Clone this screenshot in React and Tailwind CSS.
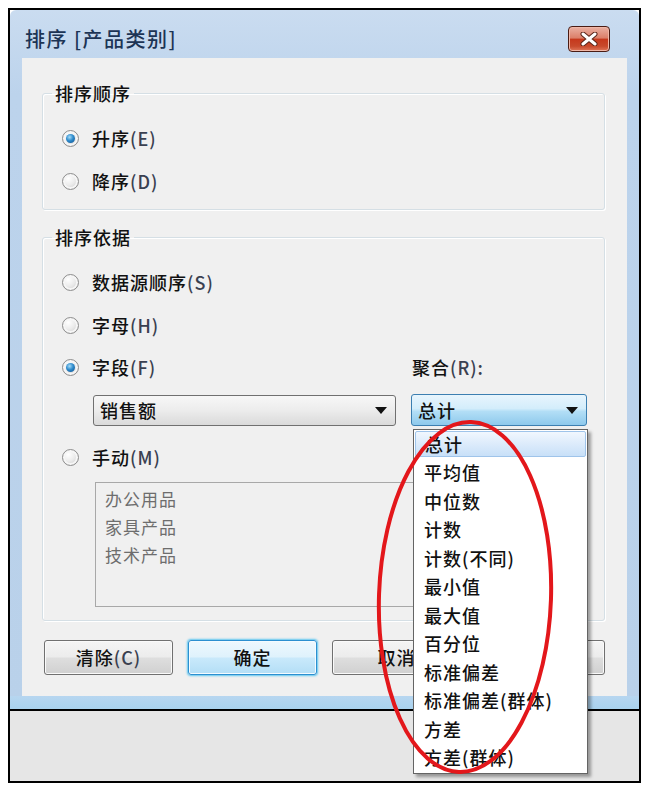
import React from "react";

function Radio({ checked }) {
  return (
    <span className="w-[17px] h-[17px] shrink-0 rounded-full border border-[#8e8e8e] bg-[radial-gradient(circle_at_35%_30%,#ffffff_0%,#ececec_45%,#c8c8c8_100%)] flex items-center justify-center shadow-[inset_0_0_0_2px_#f6f6f6]">
      {checked && (
        <span className="w-[9px] h-[9px] rounded-full bg-[radial-gradient(circle_at_40%_35%,#a6dcf8_0%,#2e8bcc_45%,#0a4a88_100%)]" />
      )}
    </span>
  );
}

function RadioRow({ checked, label, hot, className = "" }) {
  return (
    <div className={"flex items-center h-[26px] gap-[13px] " + className}>
      <Radio checked={checked} />
      <span className="whitespace-nowrap">
        {label}
        <span className="text-[#3a4050]">({hot})</span>
      </span>
    </div>
  );
}

function Arrow() {
  return (
    <svg width="12" height="7" viewBox="0 0 12 7" className="shrink-0">
      <polygon points="0,0 12,0 6,7" fill="#111" />
    </svg>
  );
}

function Group({ title, children, className = "" }) {
  return (
    <fieldset className={"ml-[20px] mr-[22px] border border-[#d5dfe5] rounded-[3px] shadow-[inset_1px_1px_0_#ffffff,1px_1px_0_#ffffff] " + className}>
      <legend className="ml-[-10px] px-[3px] leading-[24px] text-[18px] tracking-[1px]">{title}</legend>
      {children}
    </fieldset>
  );
}

function Btn({ children, primary }) {
  const base = "w-[129px] h-[35px] rounded-[3px] flex items-center justify-center text-[18px] tracking-[1px] ";
  const normal = "border border-[#707070] bg-[linear-gradient(to_bottom,#f4f4f4_0%,#ececec_48%,#dedede_52%,#d0d0d0_100%)] shadow-[inset_0_0_0_1px_#fafafa]";
  const prim = "border border-[#2c8fd0] bg-[linear-gradient(to_bottom,#eef8fe_0%,#dff2fc_48%,#c9e9fb_52%,#b3def6_100%)] shadow-[0_0_2px_1px_#5ec6f0,inset_0_0_0_1px_#f4fbff]";
  return <div className={base + (primary ? prim : normal)}>{children}</div>;
}

const menuItems = [
  "平均值",
  "中位数",
  "计数",
  "计数(不同)",
  "最小值",
  "最大值",
  "百分位",
  "标准偏差",
  "标准偏差(群体)",
  "方差",
  "方差(群体)",
];

export default function App() {
  return (
    <div className="relative w-[645px] h-[787px] bg-white pt-[8px] pl-[8px] text-[#111] font-medium font-['Noto_Sans_CJK_SC','Noto_Sans',sans-serif] overflow-hidden">
      {/* outer black frame */}
      <div className="w-[633px] h-[775px] border-2 border-black flex flex-col">
        {/* window */}
        <div className="h-[699px] rounded-t-[6px] bg-[linear-gradient(to_bottom,#cadcf0_0%,#bcd3ec_12%,#b9d1ea_100%)] flex flex-col">
          {/* title bar */}
          <div className="h-[48px] pt-[10px] pl-[15px] pr-[29px] flex items-center justify-between">
            <span className="text-[20px] tracking-[1.5px] text-[#1c3455]">排序 [产品类别]</span>
            <div className="w-[42px] h-[26px] rounded-[4px] border border-[#4a1c14] bg-[linear-gradient(to_bottom,#eab0a2_0%,#dc806a_45%,#c6391d_52%,#c84a2c_80%,#e0775a_100%)] shadow-[inset_0_0_0_1px_#f0b8a8] flex items-center justify-center">
              <svg width="18" height="14" viewBox="0 0 18 14">
                <path d="M3 2 L15 12 M15 2 L3 12" stroke="#5a2418" strokeWidth="5" strokeLinecap="round" />
                <path d="M3 2 L15 12 M15 2 L3 12" stroke="#ffffff" strokeWidth="3" strokeLinecap="round" />
              </svg>
            </div>
          </div>
          {/* client area */}
          <div className="mx-[12px] h-[638px] bg-[#f0f0f0] pt-[23px] flex flex-col">
            <Group title="排序顺序" className="pl-[19px] pt-[20px] pb-[15px]">
              <div className="flex flex-col gap-[17px] text-[18px] tracking-[1px]">
                <RadioRow checked label="升序" hot="E" />
                <RadioRow label="降序" hot="D" />
              </div>
            </Group>
            <Group title="排序依据" className="mt-[15px] pl-[19px] pt-[20px] pb-[13px]">
              <div className="flex flex-col text-[18px] tracking-[1px]">
                <RadioRow label="数据源顺序" hot="S" />
                <RadioRow label="字母" hot="H" className="mt-[17px]" />
                <div className="flex items-center h-[26px] mt-[16px]">
                  <div className="w-[350px]">
                    <RadioRow checked label="字段" hot="F" />
                  </div>
                  <span className="whitespace-nowrap">
                    聚合<span className="text-[#3a4050]">(R):</span>
                  </span>
                </div>
                <div className="flex items-center mt-[14px] ml-[31px] gap-[15px]">
                  <div className="w-[303px] h-[31px] rounded-[3px] border border-[#707070] bg-[linear-gradient(to_bottom,#f7f7f7_0%,#ececec_50%,#dadada_100%)] flex items-center justify-between pl-[6px] pr-[8px]">
                    <span>销售额</span>
                    <Arrow />
                  </div>
                  <div className="relative">
                    <div className="w-[176px] h-[32px] rounded-[3px] border border-[#3c7fb1] bg-[linear-gradient(to_bottom,#e8f5fd_0%,#d3edfb_45%,#b2def6_55%,#8ec9ec_100%)] flex items-center justify-between pl-[6px] pr-[8px]">
                      <span>总计</span>
                      <Arrow />
                    </div>
                    {/* dropdown list */}
                    <div className="absolute z-10 top-[35px] left-[2px] w-[175px] bg-white border border-[#646464] shadow-[3px_3px_3px_rgba(0,0,0,0.35)] pb-[1px]">
                      <div className="h-[28.5px] pt-[1px] px-[1px]">
                        <div className="h-[26px] rounded-[2px] border border-[#9fc4ea] bg-[linear-gradient(to_bottom,#f1f7fe_0%,#dcebfb_50%,#c8e0f8_100%)] flex items-center pl-[9px]">
                          总计
                        </div>
                      </div>
                      {menuItems.map((t) => (
                        <div key={t} className="h-[28.5px] flex items-center pl-[10px] whitespace-nowrap">
                          {t}
                        </div>
                      ))}
                    </div>
                  </div>
                </div>
                <RadioRow label="手动" hot="M" className="mt-[18px]" />
                <div className="mt-[12px] ml-[33px] w-[492px] h-[125px] border border-[#a8a8a8] bg-[#f0f0f0] pt-[2px] pl-[9px] text-[#6d6d6d] text-[17px] font-normal">
                  <div className="h-[28px] flex items-center">办公用品</div>
                  <div className="h-[28px] flex items-center">家具产品</div>
                  <div className="h-[28px] flex items-center">技术产品</div>
                </div>
              </div>
            </Group>
            <div className="mt-[19px] ml-[22px] flex gap-[15px]">
              <Btn>
                清除<span className="text-[#3a4050]">(C)</span>
              </Btn>
              <Btn primary>确定</Btn>
              <Btn>取消</Btn>
              <Btn>
                应用<span className="text-[#3a4050]">(A)</span>
              </Btn>
            </div>
          </div>
          <div className="flex-1 bg-[linear-gradient(to_bottom,#b7d6f0,#a9d2ee)]" />
        </div>
        {/* area below window */}
        <div className="flex-1 border-t-2 border-black bg-[#e6e6e6]" />
      </div>
      {/* red annotation ellipse */}
      <svg className="absolute left-[370px] top-[410px] z-20 pointer-events-none" width="200" height="375" viewBox="0 0 200 375">
        <ellipse cx="95" cy="187" rx="86" ry="175" fill="none" stroke="#e3171b" strokeWidth="4" transform="rotate(2 95 187)" />
      </svg>
    </div>
  );
}
